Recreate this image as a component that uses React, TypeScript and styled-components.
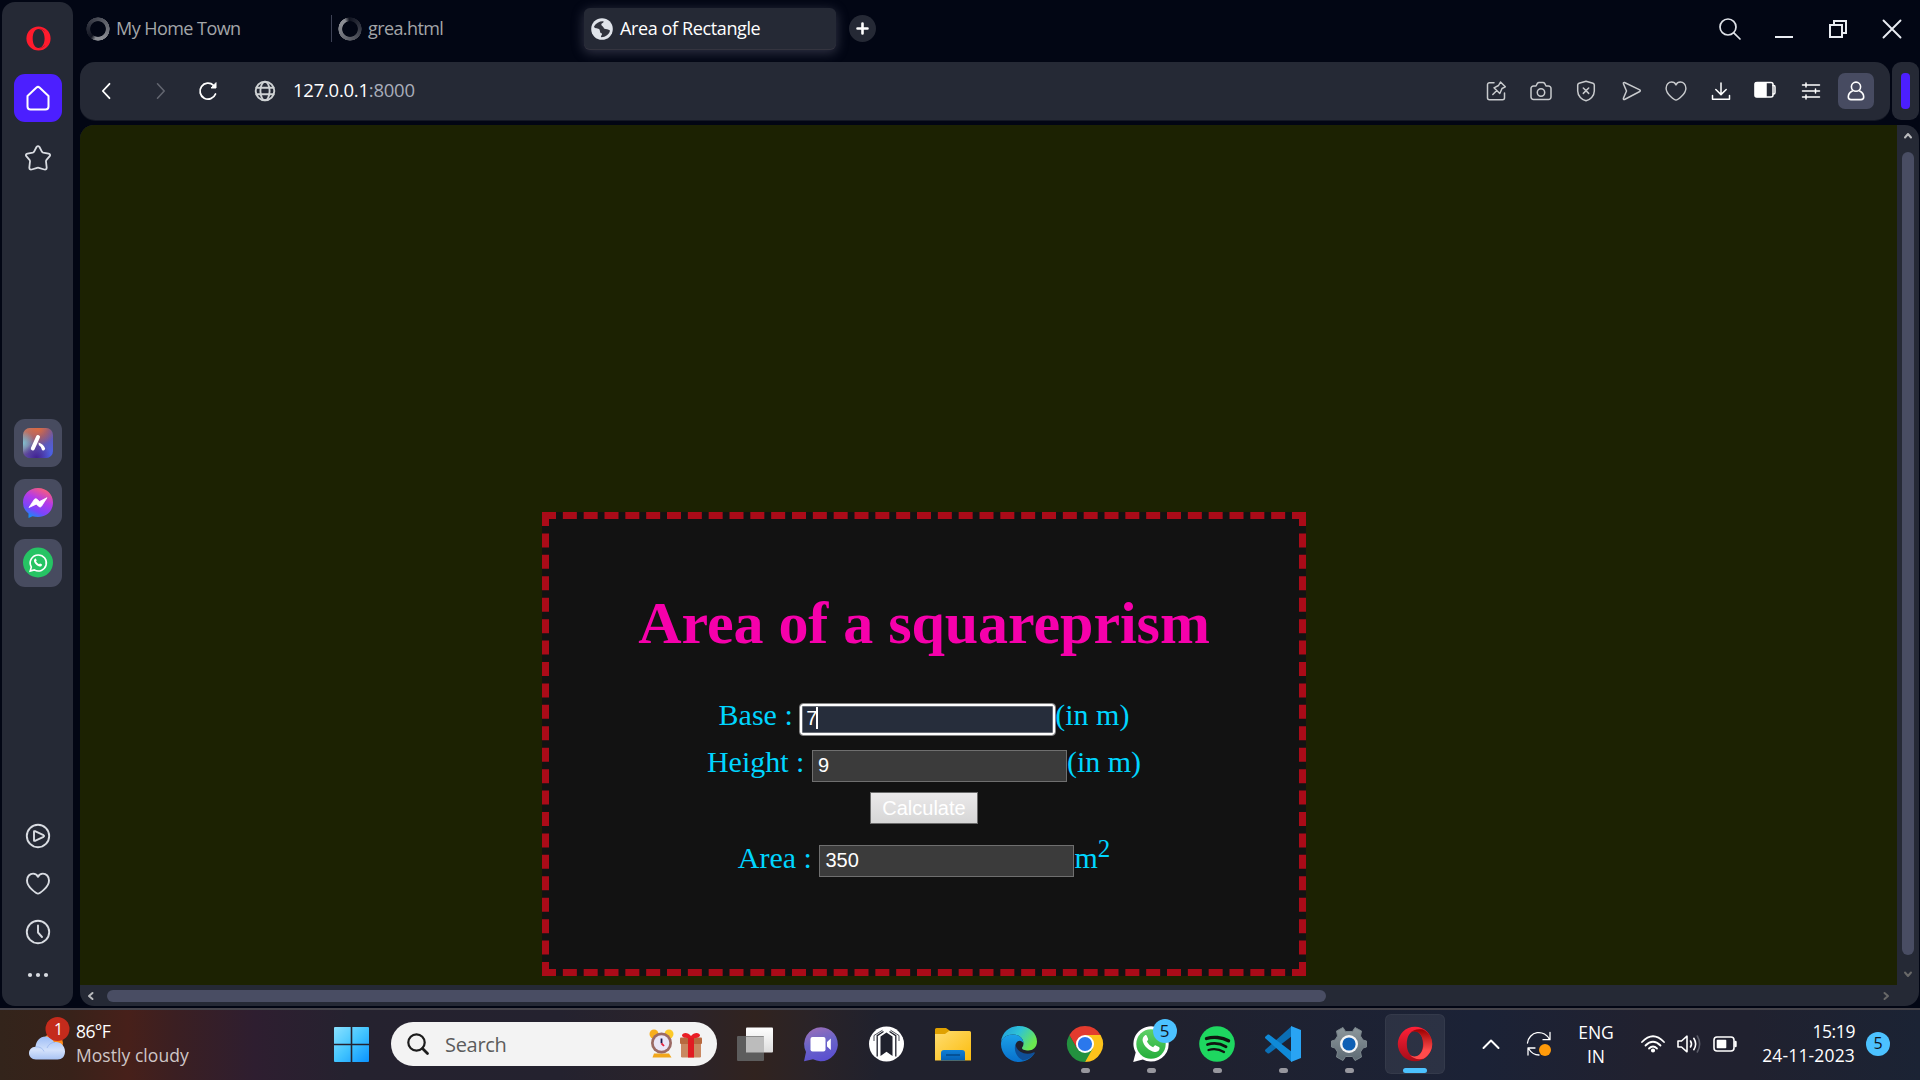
import React from 'react';
import styled, { createGlobalStyle } from 'styled-components';

const UI_FONT = '"Open Sans", "Noto Sans", sans-serif';

const GlobalStyle = createGlobalStyle`
  *, *::before, *::after { box-sizing: border-box; }
  html, body { margin: 0; padding: 0; background: #020614; overflow: hidden; }
`;

/* ---------- shell ---------- */

const Screen = styled.div`
  width: 1920px;
  height: 1080px;
  display: flex;
  flex-direction: column;
  background: #020614;
  overflow: hidden;
  font-family: ${UI_FONT};
  color: #fff;
`;

const Browser = styled.div`
  height: 1008px;
  display: flex;
  padding: 2px 1px 2px 2px;
  gap: 7px;
`;

const Svg = styled.svg`
  display: block;
  flex: none;
  overflow: visible;
`;

const Text = styled.span<{ $size: number; $ls?: number; $color?: string }>`
  font-size: ${(p) => p.$size}px;
  letter-spacing: ${(p) => p.$ls ?? 0}px;
  color: ${(p) => p.$color ?? '#fff'};
  white-space: nowrap;
`;

/* ---------- sidebar ---------- */

const Sidebar = styled.nav`
  width: 71px;
  height: 1004px;
  border-radius: 13px;
  background: #252935;
  display: flex;
  flex-direction: column;
  align-items: center;
`;

const SideSlot = styled.div<{ $h: number; $mt?: number }>`
  height: ${(p) => p.$h}px;
  margin-top: ${(p) => p.$mt ?? 0}px;
  display: flex;
  align-items: center;
  justify-content: center;
`;

const SideTile = styled.div<{ $bg: string; $mt: number }>`
  width: 48px;
  height: 48px;
  margin-top: ${(p) => p.$mt}px;
  border-radius: 11px;
  background: ${(p) => p.$bg};
  display: flex;
  align-items: center;
  justify-content: center;
`;

/* ---------- tab strip ---------- */

const Column = styled.div`
  flex: 1;
  display: flex;
  flex-direction: column;
`;

const TabStrip = styled.header`
  height: 60px;
  display: flex;
  align-items: center;
  padding: 0 0 6px 0;
`;

const Tab = styled.div<{ $w: number; $active?: boolean; $divider?: boolean }>`
  width: ${(p) => p.$w}px;
  height: ${(p) => (p.$active ? 41 : 27)}px;
  display: flex;
  align-items: center;
  gap: ${(p) => (p.$active ? 7 : 6)}px;
  padding-left: ${(p) => (p.$active ? 7 : 6)}px;
  border-radius: ${(p) => (p.$active ? 6 : 0)}px;
  background: ${(p) => (p.$active ? '#252935' : 'transparent')};
  border-left: ${(p) => (p.$divider ? '1px solid #3d4154' : 'none')};
  box-shadow: ${(p) => (p.$active ? '0 1px 0 #34343f, 0 3px 12px 1px rgba(110,110,130,0.42)' : 'none')};
`;

const TabTitle = styled(Text)`
  padding-bottom: 1px;
`;

const Spinner = styled.div<{ $from: number }>`
  width: 24px;
  height: 24px;
  border-radius: 50%;
  background: conic-gradient(from ${(p) => p.$from}deg, #10131f, #8b8d93 25deg, #8b8d93 60deg, #191c29 340deg, #10131f);
  transform: scaleX(-1);
  mask: radial-gradient(circle, transparent 7.4px, #000 8.2px, #000 11.4px, transparent 12px);
`;

const NewTab = styled.div`
  width: 27px;
  height: 27px;
  margin-left: 13px;
  border-radius: 50%;
  background: #252935;
  display: flex;
  align-items: center;
  justify-content: center;
`;

const WindowControls = styled.div`
  margin-left: auto;
  display: flex;
`;

const Cell = styled.div<{ $w: number }>`
  width: ${(p) => p.$w}px;
  display: flex;
  align-items: center;
  justify-content: center;
  flex: none;
`;

/* ---------- address bar ---------- */

const BarRow = styled.div`
  height: 58px;
  display: flex;
  gap: 2px;
`;

const AddressBar = styled.div`
  width: 1810px;
  height: 58px;
  border-radius: 15px;
  background: #252935;
  box-shadow: 0 1px 0 #141824;
  display: flex;
  align-items: center;
  padding-right: 12px;
`;

const Url = styled.div`
  margin-left: -11px;
  padding-bottom: 2px;
  flex: 1;
  display: flex;
`;

const ProfileTile = styled.div`
  width: 36px;
  height: 36px;
  border-radius: 7px;
  background: #474b61;
  display: flex;
  align-items: center;
  justify-content: center;
`;

const SidePanelHandle = styled.div`
  width: 27px;
  height: 58px;
  border-radius: 9px;
  background: #252935;
  display: flex;
  align-items: center;
  justify-content: center;
  &::before {
    content: '';
    width: 9px;
    height: 36px;
    border-radius: 4px;
    background: #4c1fff;
  }
`;

/* ---------- page ---------- */

const Viewport = styled.div`
  width: 1839px;
  height: 882px;
  margin-top: 5px;
  border-radius: 14px;
  overflow: hidden;
  background: #252935;
  display: grid;
  grid-template: 860px 22px / 1817px 22px;
`;

const Page = styled.main`
  background: #1c2202;
  padding: 387px 0 0 462px;
  font-family: "Liberation Serif", "Times New Roman", serif;
`;

const Card = styled.section`
  width: 764px;
  height: 464px;
  border: 7px dashed #aa0b18;
  background: #121212;
  color: #00d5ff;
  font-size: 30px;
  line-height: 34px;
  display: flex;
  flex-direction: column;
  align-items: center;
`;

const Title = styled.h1`
  margin: 70px 0 0;
  font-size: 60px;
  line-height: 68px;
  letter-spacing: -0.05px;
  font-weight: 700;
  color: #f600ab;
  white-space: nowrap;
`;

const Line = styled.div<{ $mt: number }>`
  height: 34px;
  margin-top: ${(p) => p.$mt}px;
  display: flex;
  white-space: pre;
`;

const Field = styled.div<{ $focus?: boolean; $mt?: number }>`
  width: 255px;
  height: 32px;
  margin-top: ${(p) => p.$mt ?? 5}px;
  padding-left: 5px;
  border: 1px solid ${(p) => (p.$focus ? '#858585' : '#6f6f6f')};
  background: ${(p) => (p.$focus ? '#262d3b' : '#3b3b3b')};
  color: #fff;
  font-family: "Liberation Sans", Arial, sans-serif;
  font-size: 20px;
  line-height: 29px;
  display: flex;
  ${(p) =>
    p.$focus &&
    `
    width: 257px;
    height: 33px;
    margin: 5px -1px 0;
    padding-left: 6px;
    border-radius: 4px;
    line-height: 28px;
    box-shadow: inset 0 0 0 2px #fff, inset 0 0 0 3px #666b74;
  `}
`;

const Caret = styled.i`
  width: 2px;
  height: 22px;
  margin: 3px 0 0 -1px;
  background: #fff;
`;

const CalcButton = styled.div`
  width: 108px;
  height: 32px;
  margin-top: 13px;
  border: 1px solid #6b6b6b;
  background: linear-gradient(#ebe9ea, #d6d6d6);
  color: #fff;
  font-family: "Liberation Sans", Arial, sans-serif;
  font-size: 20px;
  line-height: 30px;
  text-align: center;
`;

const Sup = styled.span`
  font-size: 25px;
  margin-top: -9px;
`;

const VScroll = styled.div`
  display: flex;
  flex-direction: column;
  align-items: center;
  padding-top: 7px;
`;

const HScroll = styled.div`
  display: flex;
  align-items: center;
  padding: 0 7px 0 7px;
  height: 22px;
`;

const VThumb = styled.div`
  width: 12px;
  height: 803px;
  margin: 13px 0 16px;
  border-radius: 6px;
  background: #494d63;
`;

const HThumb = styled.div`
  width: 1219px;
  height: 12px;
  margin-left: 13px;
  margin-right: auto;
  border-radius: 6px;
  background: #494d63;
`;

/* ---------- taskbar ---------- */

const Taskbar = styled.footer`
  height: 72px;
  border-top: 2px solid #45434a;
  background: linear-gradient(90deg, #33241b 0, #38221a 70px, #47201a 128px, #3b1f22 175px, #2e1e30 255px, #25222f 350px, #24222f 560px, #2b2329 690px, #31231f 755px, #2a2327 810px, #20212d 880px, #20212e 1160px, #1b2236 1480px, #21212f 1650px, #20212f 1750px, #1b2334 1920px);
  display: flex;
`;

const Weather = styled.div`
  width: 334px;
  display: flex;
  padding-left: 28px;
`;

const WeatherText = styled.div`
  margin: 9px 0 0 6px;
  display: flex;
  flex-direction: column;
  line-height: 24px;
`;

const StartCell = styled.div`
  width: 57px;
  height: 68px;
  padding-top: 17px;
`;

const SearchBox = styled.div`
  width: 326px;
  height: 44px;
  margin: 12px 5px 0 0;
  border-radius: 22px;
  background: #f3f3f3;
  display: flex;
  align-items: center;
  padding: 0 14px 0 16px;
`;

const SearchText = styled(Text)`
  margin: 0 auto 0 16px;
`;

const AppCell = styled.div<{ $active?: boolean }>`
  width: 60px;
  height: 60px;
  margin: 4px 3px 0;
  padding: 12px 0 1px;
  border-radius: 6px;
  background: ${(p) => (p.$active ? 'rgba(255,255,255,0.075)' : 'transparent')};
  box-shadow: ${(p) => (p.$active ? 'inset 0 0 0 1px rgba(255,255,255,0.04)' : 'none')};
  display: flex;
  flex-direction: column;
  align-items: center;
  justify-content: space-between;
  position: relative;
`;

const Indicator = styled.i<{ $on?: boolean; $active?: boolean }>`
  width: ${(p) => (p.$active ? 24 : 9)}px;
  height: 5px;
  border-radius: 3px;
  background: ${(p) => (p.$active ? '#4cc2ff' : p.$on ? '#97979e' : 'transparent')};
`;

const Badge = styled.span`
  position: absolute;
  left: 31.5px;
  top: 5px;
  width: 24px;
  height: 24px;
  border-radius: 50%;
  background: #4cc2ff;
  color: #10151c;
  font-size: 17px;
  line-height: 24px;
  text-align: center;
`;

const Tray = styled.div`
  margin-left: auto;
  padding-right: 30px;
  display: flex;
  align-items: center;
  height: 68px;
`;

const TwoLine = styled.div<{ $w: number; $align: string; $lh: number; $mt?: number }>`
  width: ${(p) => p.$w}px;
  display: flex;
  flex-direction: column;
  align-items: ${(p) => p.$align};
  line-height: ${(p) => p.$lh}px;
  margin-top: ${(p) => p.$mt ?? 0}px;
`;

const Notify = styled.div`
  width: 24px;
  height: 24px;
  margin-left: 11px;
  border-radius: 50%;
  background: #4cc2ff;
  color: #10151c;
  font-size: 16px;
  line-height: 23px;
  text-align: center;
`;

/* ---------- drawings ---------- */

type StrokeProps = { w: number; h: number; c?: string; sw?: number; fill?: string; children: React.ReactNode };

const Stroke = ({ w, h, c = '#d9dce2', sw = 1.6, fill = 'none', children }: StrokeProps) => (
  <Svg width={w} height={h} viewBox={`0 0 ${w} ${h}`} fill={fill} stroke={c} strokeWidth={sw} strokeLinecap="round" strokeLinejoin="round">
    {children}
  </Svg>
);

const HEART = 'M12 21.6C10.8 21.6 1 15.4 1 8.4C1 4.4 3.8 1.6 7.1 1.6C9.6 1.6 11.2 3 12 4.8C12.8 3 14.4 1.6 16.9 1.6C20.2 1.6 23 4.4 23 8.4C23 15.4 13.2 21.6 12 21.6Z';

const WhatsGlyph = 'M8.1 6.5C8.5 6.1 9.2 6.2 9.4 6.7L10.3 8.8C10.4 9.1 10.3 9.4 9.5 10.5C10.4 12.2 11.8 13.5 13.6 14.3C14.6 13.2 14.8 12.9 15.3 13.1L17.4 14.1C17.9 14.4 17.9 14.8 17.7 15.6C17.3 16.9 15.8 17.6 14.6 17.4C11 16.9 7.4 13.4 6.7 10.2C6.4 8.7 7.1 7.2 8.1 6.5Z';

const OperaFlat = () => (
  <Svg width={24} height={25} viewBox="0 0 24 25">
    <path fillRule="evenodd" fill="#ff1b2d" d="M12.500 .4a12.100 12.100 0 1 0 0 24.200a12.100 12.100 0 0 0 0-24.200ZM12.500 3C16 3 18.600 7 18.600 12.500S16 22 12.500 22S6.700 18 6.700 12.500S9 3 12.500 3Z" />
    <path fill="none" stroke="#9c1a2a" strokeWidth=".7" d="M13.500 2.900Q16.500 3 18.800 5.500M13.500 22.100Q16.500 22 18.800 19.500" />
  </Svg>
);

const OperaTask = () => (
  <Svg width={36} height={36} viewBox="0 0 36 36">
    <defs>
      <linearGradient id="opA" x1="0" y1="0" x2="0" y2="1"><stop offset="0" stopColor="#ff2038" /><stop offset="1" stopColor="#a60c18" /></linearGradient>
      <linearGradient id="opB" x1="0" y1="0" x2="0" y2="1"><stop offset="0" stopColor="#9c0000" /><stop offset=".7" stopColor="#ff4b4b" /></linearGradient>
    </defs>
    <path fill="url(#opA)" fillRule="evenodd" d="M18 .8a17.200 17.200 0 1 0 0 34.400a17.200 17.200 0 0 0 0-34.400ZM18 5C22.500 5 26 10.500 26 18S22.500 31 18 31S9.800 25.500 9.800 18S13 5 18 5Z" />
    <path fill="url(#opB)" fillRule="evenodd" d="M12.800 7.200C16 3.300 21 2.600 26 3.500C32 6.500 35.200 12 35.200 18S32 29.500 26.500 32.800C21 34 16 32.800 12.800 28.800C18 33 26.500 29 26.500 18S18 3 12.800 7.200Z" />
  </Svg>
);

const Globe = () => (
  <Stroke w={22} h={22} c="#cfd2d4" sw={1.9}>
    <circle cx="11" cy="11" r="9.300" />
    <ellipse cx="11" cy="11" rx="4.600" ry="9.300" />
    <path d="M2.500 7.700H19.500M2.500 14.300H19.500" />
  </Stroke>
);

const FavGlobe = () => (
  <Svg width={22} height={22} viewBox="0 0 22 22">
    <circle cx="11" cy="11" r="10.800" fill="#dfe3ea" />
    <path d="M3 8.500C5 5 8.500 3 12.500 3.200C13 5 10.500 4.800 10.300 6.500C10.200 8 12.800 8.500 13 10.500C15 11.300 17.300 11 19 12.500C18.300 16.500 14.500 19 10.500 19.200C9 18.500 11.200 17.500 11 15.500C8.500 15.300 9.500 12.500 8 11C6 10 3.500 10.800 3 8.500Z" fill="#30333e" />
  </Svg>
);

const WindowsLogo = () => (
  <Svg width={35} height={35} viewBox="0 0 35 35">
    <defs>
      <linearGradient id="win" x1="0" y1="0" x2="1" y2="1"><stop offset="0" stopColor="#8be1ff" /><stop offset=".5" stopColor="#43c5ff" /><stop offset="1" stopColor="#0a93ff" /></linearGradient>
    </defs>
    <path fill="url(#win)" d="M1 0H16.700V16.700H0V1A1 1 0 0 1 1 0ZM18.300 0H34A1 1 0 0 1 35 1V16.700H18.300ZM0 18.300H16.700V35H1A1 1 0 0 1 0 34ZM18.300 18.300H35V34A1 1 0 0 1 34 35H18.300Z" />
  </Svg>
);

const WeatherIcon = () => (
  <Svg width={42} height={48} viewBox="0 0 42 48">
    <defs>
      <linearGradient id="cl" x1="0" y1="0" x2="0" y2="1"><stop offset="0" stopColor="#9dbdf6" /><stop offset=".6" stopColor="#d3e1fb" /><stop offset="1" stopColor="#a9c3f3" /></linearGradient>
    </defs>
    <circle cx="25" cy="26" r="10" fill="#ff8a1a" />
    <path fill="url(#cl)" d="M8 42.500C3.500 42.500 1 39.500 1 36.300C1 33 3.500 29.800 7.500 29.800C8 24 12 19.500 17.500 19.500C21.500 19.500 24.500 21.800 26 25.200C32 24 37 28.500 37 34.500C37 39.500 34 42.500 29.500 42.500Z" />
    <path fill="none" stroke="#88a9e8" strokeWidth=".8" opacity=".7" d="M7.500 29.800C12 29.500 15 31.500 16 34.500M19 31C20.500 27.500 23 25.500 27 25.200" />
    <circle cx="29.500" cy="12" r="12" fill="#c42b1c" />
    <text x="30.500" y="17.500" textAnchor="middle" fontSize="16" fill="#fff" fontFamily='"Open Sans", sans-serif'>1</text>
  </Svg>
);

const SearchDoodle = () => (
  <Svg width={54} height={30} viewBox="0 0 54 30">
    <circle cx="5" cy="5" r="4.500" fill="#f7ae1d" /><circle cx="20" cy="5" r="4.500" fill="#fcc928" />
    <path d="M5 24.500H20L22.500 28.500H3.500Z" fill="#f2a71b" />
    <circle cx="12.500" cy="14" r="10.500" fill="#9b6a64" />
    <circle cx="12.500" cy="14" r="7.800" fill="#eae6f7" />
    <path d="M12.500 9.500V14.300" stroke="#1d1a4b" strokeWidth="1.800" /><path d="M12.500 14.300L15 17" stroke="#e8203c" strokeWidth="1.800" />
    <rect x="32" y="11.500" width="20" height="17" rx="1.200" fill="#c98861" />
    <rect x="31" y="8.500" width="22" height="6.500" rx="1" fill="#b8693f" />
    <rect x="39" y="8.500" width="6" height="20" fill="#e11b22" />
    <path d="M42 9C38 9.500 33 9 33 6.300C33 3.500 39 2.500 42 7C45 2.500 51 3.500 51 6.300C51 9 46 9.500 42 9Z" fill="#ea1e25" />
  </Svg>
);

const TaskView = () => (
  <Svg width={36} height={36} viewBox="0 0 36 36">
    <defs><linearGradient id="tv" x1="0" y1="0" x2="0" y2="1"><stop offset="0" stopColor="#fff" /><stop offset="1" stopColor="#dcdcdc" /></linearGradient></defs>
    <rect x="9" y="1.500" width="27" height="25" rx="1" fill="url(#tv)" />
    <rect x="0" y="10" width="27" height="25" rx="1" fill="#5d5d5d" />
    <path d="M9 10.500H27V26.500H9Z" fill="#bcbcbc" />
  </Svg>
);

const ChatApp = () => (
  <Svg width={36} height={36} viewBox="0 0 36 36">
    <defs><linearGradient id="ch" x1=".2" y1="0" x2=".5" y2="1"><stop offset="0" stopColor="#9c6fb8" /><stop offset=".5" stopColor="#6a64c8" /><stop offset="1" stopColor="#5b4fd0" /></linearGradient></defs>
    <path d="M18 1.200A17 17 0 1 1 10 33.300L1 35.200L3 26A17 17 0 0 1 18 1.200Z" fill="url(#ch)" />
    <rect x="7.500" y="11" width="15" height="14.500" rx="2" fill="#fff" />
    <path d="M24 16L27.800 12.500V24L24 20.500Z" fill="#fff" />
  </Svg>
);

const ArrowCircle = () => (
  <Svg width={36} height={36} viewBox="0 0 36 36">
    <circle cx="17.500" cy="18" r="17.500" fill="#fff" />
    <g fill="none" stroke="#20212d" strokeWidth="1.300">
      <path d="M14.500 5.500L8.200 9.700V30.500M20.500 5.500L26.800 9.700V30.500" />
      <path d="M13.500 4.200L5 9.500V15M21.500 4.200L30 9.500V15" strokeWidth=".8" />
    </g>
    <path d="M17.500 6.500L23.500 10.500V30L17.500 25.700L11.500 30V10.500Z" fill="#20212d" />
  </Svg>
);

const Folder = () => (
  <Svg width={36} height={36} viewBox="0 0 36 36">
    <defs><linearGradient id="fo" x1="0" y1="0" x2="1" y2="1"><stop offset="0" stopColor="#ffdd70" /><stop offset="1" stopColor="#fbbc0d" /></linearGradient>
      <linearGradient id="fb" x1="0" y1="0" x2="0" y2="1"><stop offset="0" stopColor="#0f7fd6" /><stop offset="1" stopColor="#0560b4" /></linearGradient></defs>
    <path d="M0 3.500A1.500 1.500 0 0 1 1.500 2H11L16 5.500L12 10H0Z" fill="#e0a100" />
    <path d="M0 8H10L14 5H34.500A1.500 1.500 0 0 1 36 6.500V34.500H0Z" fill="url(#fo)" />
    <path d="M6 34.500V27A3 3 0 0 1 9 24H27A3 3 0 0 1 30 27V34.500Z" fill="url(#fb)" /><path d="M11 29H25" stroke="#034b8c" strokeWidth="1.600" />
  </Svg>
);

const Edge = () => (
  <Svg width={36} height={36} viewBox="0 0 36 36">
    <defs>
      <linearGradient id="e1" x1="0" y1="0" x2="1" y2=".5"><stop offset="0" stopColor="#1d97dd" /><stop offset=".5" stopColor="#2fc3d6" /><stop offset="1" stopColor="#6be84f" /></linearGradient>
      <linearGradient id="e2" x1="0" y1="0" x2="0" y2="1"><stop offset="0" stopColor="#1ba1e8" /><stop offset="1" stopColor="#0870cc" /></linearGradient>
    </defs>
    <path d="M0 16C1 6 8.500 0 18 0C28.500 0 36 7.500 36 15.500C36 21.500 31.500 24.500 27.500 24.500C23.500 24.500 21 23.500 21 22C21 21 22.500 20.500 22.500 17.500C22.500 13 18.500 8.500 12 8.500C6 8.500 1.500 11.500 0 16Z" fill="url(#e1)" />
    <path d="M0 18C0 12.500 5 8.500 12 8.500C18.500 8.500 22.500 13 22.500 17.500C21 14.500 18.500 14 16.500 15.500C13 18 13.500 26 19 30C25 34 31 29 33.500 27C30.500 32.500 24.500 36 18 36C8 36 0 28 0 18Z" fill="url(#e2)" />
    <path d="M14.500 18C12.500 24 15 31 22 34.500C27.500 33.500 31.500 30.500 33.700 27.200C34 26.500 33.500 26 32.500 26.500C25.500 29.500 15.500 27 14.500 18Z" fill="#0f4f97" />
  </Svg>
);

const Chrome = () => (
  <Svg width={36} height={36} viewBox="0 0 36 36">
    <path d="M18 9H33.600A18 18 0 0 1 18 36L22 25Z" fill="#fcc21b" />
    <path d="M2.400 9L10.200 22.500L18 27L25.800 22.500L18 36A18 18 0 0 1 2.400 9Z" fill="#23913f" />
    <path d="M2.400 9A18 18 0 0 1 33.600 9H18L10.200 22.500Z" fill="#e33b2e" />
    <circle cx="18" cy="18" r="9" fill="#fff" /><circle cx="18" cy="18" r="7.100" fill="#2b78ec" />
  </Svg>
);

const WhatsTask = () => (
  <Svg width={36} height={36} viewBox="0 0 36 36">
    <defs><linearGradient id="wa" x1="0" y1="0" x2="0" y2="1"><stop offset="0" stopColor="#5fd168" /><stop offset="1" stopColor="#25ae3b" /></linearGradient></defs>
    <path d="M18 .3A17.600 17.600 0 1 1 9.800 33.400L.2 36L2.700 26.600A17.600 17.600 0 0 1 18 .3Z" fill="#fff" />
    <circle cx="18" cy="18" r="14.700" fill="url(#wa)" />
    <g transform="translate(-.5 -.5) scale(1.520)"><path d={WhatsGlyph} fill="#fff" /></g>
  </Svg>
);

const Spotify = () => (
  <Svg width={36} height={36} viewBox="0 0 36 36">
    <circle cx="18" cy="18" r="17.800" fill="#1ed760" />
    <g fill="none" stroke="#101510" strokeLinecap="round"><path d="M7.500 12.500C14 10.500 23 11 29.500 14.800" strokeWidth="3.400" /><path d="M8.500 18.500C14.500 16.700 21.500 17.500 27 20.700" strokeWidth="2.800" /><path d="M9.500 24C14.500 22.500 20 23 25 26" strokeWidth="2.300" /></g>
  </Svg>
);

const VSCode = () => (
  <Svg width={36} height={36} viewBox="0 0 36 36">
    <path d="M26.500 .2L.5 23.500C-.2 24.200 -.2 25 .5 25.600L2.500 27.200C3 27.600 3.700 27.600 4.300 27.200L27 10Z" fill="#0b6fb5" />
    <path d="M26.500 35.800L.5 12.500C-.2 11.800 -.2 11 .5 10.400L2.500 8.800C3 8.400 3.700 8.400 4.300 8.800L27 26Z" fill="#0f8ad8" />
    <path d="M26 0L36 4V32L26 36Z" fill="#29a4f3" />
  </Svg>
);

const Settings = () => (
  <Svg width={36} height={36} viewBox="0 0 36 36">
    <defs><linearGradient id="se" x1="0" y1="0" x2="0" y2="1"><stop offset="0" stopColor="#8d979c" /><stop offset="1" stopColor="#5e6b74" /></linearGradient></defs>
    <path fill="url(#se)" stroke="#7a858b" strokeLinejoin="round" d="M12 1.500L14.500 5.500H21.500L24 1.500L30.500 5L29.500 10L32 14L35.500 15V21L32 22L29.500 26L30.500 31L24 34.500L21.500 30.500H14.500L12 34.500L5.500 31L6.500 26L4 22L.5 21V15L4 14L6.500 10L5.500 5Z" />
    <circle cx="18" cy="18" r="9" fill="#f4f4f4" /><circle cx="18" cy="18" r="6.600" fill="#0f5fb4" />
  </Svg>
);

/* ---------- content data ---------- */

const apps: { icon: React.ReactNode; on?: boolean; active?: boolean; badge?: string }[] = [
  { icon: <TaskView /> },
  { icon: <ChatApp /> },
  { icon: <ArrowCircle /> },
  { icon: <Folder /> },
  { icon: <Edge /> },
  { icon: <Chrome />, on: true },
  { icon: <WhatsTask />, on: true, badge: '5' },
  { icon: <Spotify />, on: true },
  { icon: <VSCode />, on: true },
  { icon: <Settings />, on: true },
  { icon: <OperaTask />, active: true },
];

const T = '#c8cacd';

const tools: React.ReactNode[] = [
  <Stroke w={20} h={20} c={T} sw={1.500}><path d="M8 1.700H3.500A2 2 0 0 0 1.500 3.700V16.700A2 2 0 0 0 3.500 18.700H16.500A2 2 0 0 0 18.500 16.700V12" /><path d="M14.500 1L19.300 5.800L16 7.500L13.800 12.500L8 6.800L12.500 4.500ZM10.800 9.500L6.800 13.500" /></Stroke>,
  <Stroke w={22} h={20} c={T} sw={1.500}><path d="M3.500 5H6L7.500 2.200Q8 1.500 9 1.500H13Q14 1.500 14.500 2.200L16 5H18.500A2.500 2.500 0 0 1 21 7.500V16A2.500 2.500 0 0 1 18.500 18.500H3.500A2.500 2.500 0 0 1 1 16V7.500A2.500 2.500 0 0 1 3.500 5Z" /><circle cx="11" cy="11.500" r="3.700" /></Stroke>,
  <Stroke w={20} h={22} c={T} sw={1.500}><path d="M10 1.200L17 3.200Q18.300 3.700 18.300 5V11C18.300 16 14 19.800 10 20.800C6 19.800 1.700 16 1.700 11V5Q1.700 3.700 3 3.200Z" /><path d="M7.300 8L12.700 13.400M12.700 8L7.300 13.400" /></Stroke>,
  <Stroke w={18} h={20} c={T} sw={1.500}><path d="M2.500 1.500L17.800 8.900Q18.800 9.700 17.800 10.500L2.500 18.500Q1 18.700 1.500 17L4.500 10L1.500 3Q1 1.300 2.500 1.500Z" /></Stroke>,
  <Stroke w={24} h={22} c={T} sw={1.600}><g transform="translate(1.200 .6) scale(.9)"><path d={HEART} /></g></Stroke>,
  <Stroke w={20} h={20} c="#fff" sw={1.500}><path d="M10 2V13M4.800 8.500L10 13.600L15.200 8.500M1.500 14.500V18.200H18.500V14.500" /></Stroke>,
  <Stroke w={23} h={19} c="#fff" sw={1.500}><rect x="1" y="1.500" width="18" height="14.500" rx="2" /><path d="M1.500 2H12V15.500H1.500Z" fill="#fff" /><path d="M19 4.500H19.800Q21 4.500 21 6V11.500Q21 13 19.800 13H19" /></Stroke>,
  <Stroke w={20} h={18} c="#fff" sw={1.500}><path d="M1.500 3H18.500M1.500 9H18.500M1.500 15H18.500M5 1V5M14.500 7V11M5 13V17" /></Stroke>,
];

export default function App() {
  return (
    <Screen>
      <GlobalStyle />
      <Browser>
        <Sidebar>
          <SideSlot $h={26} $mt={23}><OperaFlat /></SideSlot>
          <SideTile $bg="#4c1fff" $mt={23}>
            <Stroke w={24} h={26} c="#fff" sw={2}><path d="M1.500 11L10.500 2.500Q12 1.300 13.500 2.500L22.500 11V21.500A3 3 0 0 1 19.500 24.500H4.500A3 3 0 0 1 1.500 21.500Z" /></Stroke>
          </SideTile>
          <SideSlot $h={26} $mt={23}>
            <Stroke w={26} h={26} sw={1.800}><path d="M11.500 2Q13 .2 14.500 2L17 6.800Q17.400 7.400 18.200 7.600L23.500 8.600Q26 9.300 24.700 11.200L21.300 15.200Q20.900 15.800 21 16.500L21.700 22.600Q21.500 25.100 19.300 24.500L13.800 22.800Q13 22.600 12.200 22.800L6.700 24.500Q4.500 25.100 4.300 22.600L5 16.500Q5.100 15.800 4.700 15.200L1.300 11.200Q0 9.300 2.500 8.600L7.800 7.600Q8.600 7.400 9 6.800Z" /></Stroke>
          </SideSlot>
          <SideTile $bg="#474b5f" $mt={248}>
            <Svg width={30} height={30} viewBox="0 0 30 30">
              <defs>
                <linearGradient id="ar" x1="0" y1="0" x2="1" y2="1"><stop offset="0" stopColor="#c4846a" /><stop offset=".45" stopColor="#6b5398" /><stop offset="1" stopColor="#4463f4" /></linearGradient>
                <radialGradient id="ar2" cx=".5" cy="0" r=".6"><stop offset="0" stopColor="#dd6a40" /><stop offset="1" stopColor="#dd6a40" stopOpacity="0" /></radialGradient>
                <radialGradient id="ar3" cx="0" cy=".5" r=".4"><stop offset="0" stopColor="#7fbfd0" /><stop offset="1" stopColor="#7fbfd0" stopOpacity="0" /></radialGradient>
                <radialGradient id="ar4" cx=".45" cy="1" r=".5"><stop offset="0" stopColor="#42208f" /><stop offset="1" stopColor="#42208f" stopOpacity="0" /></radialGradient>
              </defs>
              {['ar', 'ar2', 'ar3', 'ar4'].map((g) => <rect key={g} width="30" height="30" rx="7" fill={`url(#${g})`} />)}
              <path d="M15 9L9.800 20.500" stroke="#fff" strokeWidth="4" strokeLinecap="round" />
              <path d="M15.500 14.500Q20.500 16 22.200 20.500Q21.500 23.500 19 22Q18.300 18.500 15.800 17Z" fill="#fff" />
            </Svg>
          </SideTile>
          <SideTile $bg="#474b5f" $mt={12}>
            <Svg width={30} height={30} viewBox="0 0 30 30">
              <defs><linearGradient id="me" x1=".75" y1="0" x2=".3" y2="1"><stop offset="0" stopColor="#ff6070" /><stop offset=".4" stopColor="#b43ae8" /><stop offset=".75" stopColor="#7a45fa" /><stop offset="1" stopColor="#1290f5" /></linearGradient></defs>
              <path d="M15 0C24 0 30 6.500 30 14.500S24 29 15 29Q12 29 9.500 28.200L5.500 30V25.500Q0 21.500 0 14.500C0 6.500 6 0 15 0Z" fill="url(#me)" />
              <path d="M6 19.500L11.500 11.200Q12.500 10.200 13.700 11L16.500 13.500L24 9.700L18.500 18.200Q17.500 19.500 16.300 18.700L13.200 16.200Z" fill="#fff" stroke="#fff" strokeWidth=".8" strokeLinejoin="round" />
            </Svg>
          </SideTile>
          <SideTile $bg="#474b5f" $mt={12}>
            <Svg width={30} height={30} viewBox="0 0 30 30">
              <circle cx="15" cy="14.500" r="15" fill="#26c464" />
              <path d="M15.300 7A8 8 0 1 1 11.300 21.900L7.200 23L8.300 19A8 8 0 0 1 15.300 7Z" fill="none" stroke="#fff" strokeWidth="1.600" />
              <g transform="translate(6.200 6) scale(.72)"><path d={WhatsGlyph} fill="#fff" /></g>
            </Svg>
          </SideTile>
          <SideSlot $h={26} $mt={236}>
            <Stroke w={26} h={26} sw={1.900}><circle cx="13" cy="13" r="11.200" /><path d="M9 8.800Q9 7.800 10 8.200L18.500 12.200Q19.700 13 18.500 13.800L10 17.800Q9 18.200 9 17.200Z" /></Stroke>
          </SideSlot>
          <SideSlot $h={26} $mt={22}><Stroke w={24} h={24} sw={1.900}><path d={HEART} /></Stroke></SideSlot>
          <SideSlot $h={26} $mt={22}>
            <Stroke w={26} h={26} sw={1.900}><circle cx="13" cy="13" r="11.200" /><path d="M13 6.500V13.500L17 18" /></Stroke>
          </SideSlot>
          <SideSlot $h={6} $mt={27}>
            <Svg width={22} height={6} viewBox="0 0 22 6" fill="#d9dce2"><circle cx="3" cy="3" r="2.100" /><circle cx="11" cy="3" r="2.100" /><circle cx="19" cy="3" r="2.100" /></Svg>
          </SideSlot>
        </Sidebar>

        <Column>
          <TabStrip>
            <Tab $w={251}><Spinner $from={140} /><TabTitle $size={18} $ls={-0.550} $color="#a3a5a8">My Home Town</TabTitle></Tab>
            <Tab $w={253} $divider><Spinner $from={5} /><TabTitle $size={18} $ls={-0.600} $color="#a3a5a8">grea.html</TabTitle></Tab>
            <Tab $w={252} $active><FavGlobe /><TabTitle $size={18} $ls={-0.380}>Area of Rectangle</TabTitle></Tab>
            <NewTab><Stroke w={13} h={13} c="#fff" sw={2.600}><path d="M6.500 1.500V11.500M1.500 6.500H11.500" /></Stroke></NewTab>
            <WindowControls>
              <Cell $w={54}><Stroke w={22} h={22} c="#dfe2e8" sw={1.700}><circle cx="9" cy="9" r="8" /><path d="M14.800 14.800L21 21" /></Stroke></Cell>
              <Cell $w={54}><Stroke w={18} h={18} c="#e9ecf2" sw={2}><path d="M1 17H17" strokeLinecap="square" /></Stroke></Cell>
              <Cell $w={54}><Svg width={18} height={18} viewBox="0 0 18 18" fill="none" stroke="#e9ecf2" strokeWidth="2"><path d="M1 5H13V17H1ZM5 5V1H17V13H13" /></Svg></Cell>
              <Cell $w={54}><Stroke w={18} h={18} c="#e9ecf2" sw={1.900}><path d="M.5 .5L17.500 17.500M17.500 .5L.5 17.500" /></Stroke></Cell>
            </WindowControls>
          </TabStrip>

          <BarRow>
            <AddressBar>
              <Cell $w={52}><Stroke w={8} h={16} c="#fff" sw={1.800}><path d="M7.500 .8L.8 8L7.500 15.200" /></Stroke></Cell>
              <Cell $w={58}><Stroke w={8} h={16} c="#62656f" sw={1.600}><path d="M.5 .8L7.200 8L.5 15.200" /></Stroke></Cell>
              <Cell $w={36}><Stroke w={20} h={20} c="#fff" sw={1.800}><path d="M17.500 13A8 8 0 1 1 15.500 4.300" /><path d="M18 2V7H13.500Z" fill="#fff" strokeWidth="1" /></Stroke></Cell>
              <Cell $w={78}><Globe /></Cell>
              <Url>
                <Text $size={18.500} $ls={-0.250}>127.0.0.1</Text>
                <Text $size={18.500} $ls={-0.250} $color="#a9adba">:8000</Text>
              </Url>
              {tools.map((t, i) => <Cell key={i} $w={45}>{t}</Cell>)}
              <Cell $w={45}>
                <ProfileTile><Stroke w={18} h={20} c="#fff" sw={1.600}><circle cx="9" cy="5.700" r="4.600" /><path d="M5.300 10Q1.300 12 1.300 16Q1.300 18.600 4 18.600H14Q16.700 18.600 16.700 16Q16.700 12 12.700 10" /></Stroke></ProfileTile>
              </Cell>
            </AddressBar>
            <SidePanelHandle />
          </BarRow>

          <Viewport>
            <Page>
              <Card>
                <Title>Area of a squareprism</Title>
                <Line $mt={41}>Base : <Field $focus>7<Caret /></Field>(in m)</Line>
                <Line $mt={13}>Height : <Field>9</Field>(in m)</Line>
                <CalcButton>Calculate</CalcButton>
                <Line $mt={17}>Area : <Field $mt={4}>350</Field>m<Sup>2</Sup></Line>
              </Card>
            </Page>
            <VScroll>
              <Stroke w={8} h={7} c="#b9babd" sw={2}><path d="M1 5.500L4 2L7 5.500" /></Stroke>
              <VThumb />
              <Stroke w={8} h={7} c="#686868" sw={2}><path d="M1 1.500L4 5L7 1.500" /></Stroke>
            </VScroll>
            <HScroll>
              <Stroke w={7} h={8} c="#b9babd" sw={2}><path d="M5.500 1L2 4L5.500 7" /></Stroke>
              <HThumb />
              <Stroke w={7} h={8} c="#686868" sw={2}><path d="M1.500 1L5 4L1.500 7" /></Stroke>
            </HScroll>
          </Viewport>
        </Column>
      </Browser>

      <Taskbar>
        <Weather>
          <SideSlot $h={48} $mt={7}><WeatherIcon /></SideSlot>
          <WeatherText>
            <Text $size={17.500} $ls={-0.600}>86°F</Text>
            <Text $size={17.500} $ls={0.050} $color="#cfc6c6">Mostly cloudy</Text>
          </WeatherText>
        </Weather>
        <StartCell><WindowsLogo /></StartCell>
        <SearchBox>
          <Stroke w={22} h={22} c="#1c1c1c" sw={2.200}><circle cx="9.500" cy="9.500" r="8.200" /><path d="M15.500 15.500L20.500 20.500" strokeWidth="2.800" /></Stroke>
          <SearchText $size={20} $ls={-0.300} $color="#5c5c5c">Search</SearchText>
          <SearchDoodle />
        </SearchBox>
        {apps.map((a, i) => (
          <AppCell key={i} $active={a.active}>
            {a.icon}
            {a.badge && <Badge>{a.badge}</Badge>}
            <Indicator $on={a.on} $active={a.active} />
          </AppCell>
        ))}
        <Tray>
          <Cell $w={49}><Stroke w={18} h={10} c="#fff" sw={2}><path d="M1.500 9L9 1.500L16.500 9" /></Stroke></Cell>
          <Cell $w={48}>
            <Stroke w={26} h={26} c="#fff" sw={1.300}><path d="M1.500 12A11.500 11.500 0 0 1 23.500 8.500M24 1.500V8.700H17M2 24V17H9M2.500 17.500Q6.500 24 13 24" /><circle cx="19" cy="19" r="6" fill="#ff9a0a" stroke="none" /></Stroke>
          </Cell>
          <TwoLine $w={66} $align="center" $lh={23.500} $mt={1}><Text $size={17.500}>ENG</Text><Text $size={17.500}>IN</Text></TwoLine>
          <Cell $w={48}>
            <Stroke w={24} h={18} c="#fff" sw={1.800}><path d="M1 7Q12 -4.500 23 7M4.500 10.500Q12 3 19.500 10.500M8 13.500Q12 9.500 16 13.500" /><circle cx="12" cy="15.500" r="1.200" fill="#fff" /></Stroke>
          </Cell>
          <Cell $w={24}>
            <Stroke w={25} h={18} c="#fff" sw={1.600}><path d="M1 6H4.500L10 1.200V16.800L4.500 12H1ZM13.500 6Q15.500 9 13.500 12M16.800 3.300Q20.500 9 16.800 14.700" /><path d="M20.300 1Q25 9 20.300 17" stroke="#5b5d69" /></Stroke>
          </Cell>
          <Cell $w={49}>
            <Stroke w={25} h={16} c="#fff" sw={1.600}><rect x="1" y="1" width="20" height="14" rx="3" /><rect x="4.500" y="4.500" width="8" height="7" fill="#fff" /><path d="M22.500 6V10" strokeWidth="2.400" /></Stroke>
          </Cell>
          <TwoLine $w={105} $align="flex-end" $lh={24.500} $mt={-2}><Text $size={17.500} $ls={-0.400}>15:19</Text><Text $size={17.500} $ls={0.150}>24-11-2023</Text></TwoLine>
          <Notify>5</Notify>
        </Tray>
      </Taskbar>
    </Screen>
  );
}
